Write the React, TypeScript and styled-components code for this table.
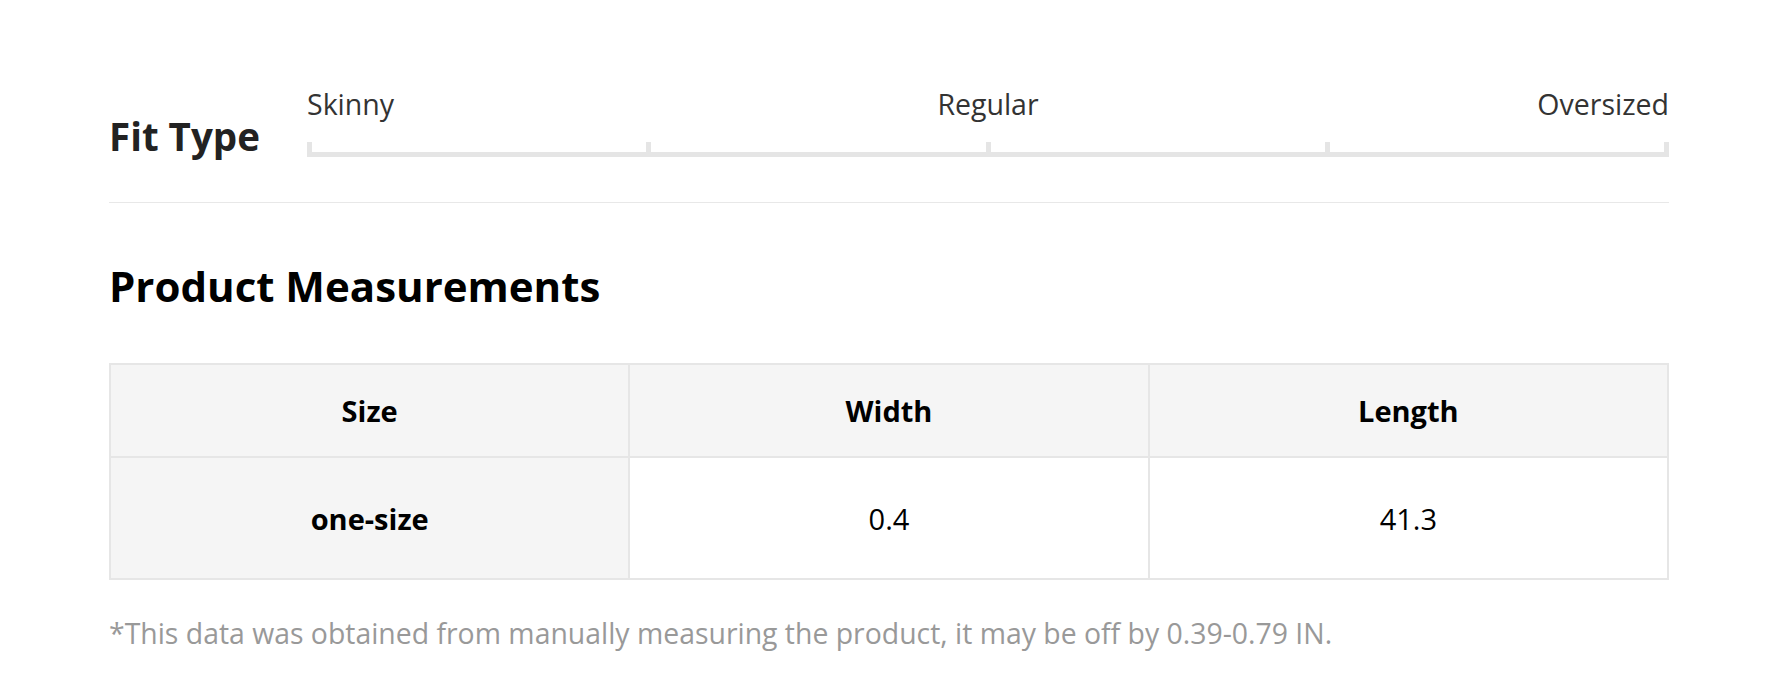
import React from "react";
import styled, { createGlobalStyle } from "styled-components";

const GlobalStyle = createGlobalStyle`
  html, body {
    margin: 0;
    padding: 0;
    background: #ffffff;
  }
  body {
    font-family: "Open Sans", "Noto Sans", Arial, sans-serif;
    color: #222222;
  }
`;

const Page = styled.div`
  width: 1560px;
  padding: 0 0 0 109px;
`;

const FitSection = styled.section`
  display: flex;
  align-items: flex-end;
  padding-top: 84px;
  padding-bottom: 45px;
  border-bottom: 1px solid #e8e8e8;
`;

const FitLabel = styled.h3`
  margin: 0 0 1px 0;
  width: 198px;
  flex: none;
  font-size: 38.5px;
  line-height: 40px;
  font-weight: 700;
  color: #222222;
`;

const Scale = styled.div`
  flex: 1;
  display: flex;
  flex-direction: column;
  gap: 18px;
`;

const ScaleLabels = styled.div`
  display: grid;
  grid-template-columns: 1fr 1fr 1fr;
  font-size: 28.5px;
  line-height: 40px;
  color: #333333;
`;

const ScaleLabel = styled.span<{ $align: "left" | "center" | "right" }>`
  text-align: ${(p) => p.$align};
  white-space: nowrap;
`;

const Track = styled.div`
  position: relative;
  height: 15px;
`;

const Bar = styled.div`
  position: absolute;
  left: 0;
  right: 0;
  bottom: 0;
  height: 5px;
  background: #e5e5e5;
`;

const Tick = styled.span<{ $pos: number }>`
  position: absolute;
  bottom: 0;
  width: 5px;
  height: 15px;
  background: #e5e5e5;
  left: ${(p) => `calc(${p.$pos}% - ${(p.$pos / 100) * 5}px)`};
`;

const Heading = styled.h2`
  margin: 57px 0 0 0;
  font-size: 42px;
  line-height: 52px;
  font-weight: 700;
  color: #000000;
`;

const Table = styled.table`
  margin-top: 51px;
  width: 1560px;
  border-collapse: collapse;
  table-layout: fixed;
  border: 2px solid #e6e6e6;
`;

const HeadCell = styled.th`
  height: 91px;
  padding: 0;
  border: 2px solid #e6e6e6;
  background: #f5f5f5;
  font-size: 29px;
  font-weight: 700;
  color: #000000;
  text-align: center;
`;

const Cell = styled.td<{ $shaded?: boolean }>`
  height: 120px;
  padding: 0;
  border: 2px solid #e6e6e6;
  background: ${(p) => (p.$shaded ? "#f5f5f5" : "#ffffff")};
  font-size: 29px;
  font-weight: ${(p) => (p.$shaded ? 700 : 400)};
  color: #000000;
  text-align: center;
`;

const Note = styled.p`
  margin: 33px 0 0 0;
  font-size: 28.4px;
  line-height: 40px;
  color: #999999;
`;

const ticks = [0, 25, 50, 75, 100];

export default function App() {
  return (
    <>
      <GlobalStyle />
      <Page>
        <FitSection>
          <FitLabel>Fit Type</FitLabel>
          <Scale>
            <ScaleLabels>
              <ScaleLabel $align="left">Skinny</ScaleLabel>
              <ScaleLabel $align="center">Regular</ScaleLabel>
              <ScaleLabel $align="right">Oversized</ScaleLabel>
            </ScaleLabels>
            <Track>
              <Bar />
              {ticks.map((t) => (
                <Tick key={t} $pos={t} />
              ))}
            </Track>
          </Scale>
        </FitSection>
        <Heading>Product Measurements</Heading>
        <Table>
          <thead>
            <tr>
              <HeadCell>Size</HeadCell>
              <HeadCell>Width</HeadCell>
              <HeadCell>Length</HeadCell>
            </tr>
          </thead>
          <tbody>
            <tr>
              <Cell $shaded>one-size</Cell>
              <Cell>0.4</Cell>
              <Cell>41.3</Cell>
            </tr>
          </tbody>
        </Table>
        <Note>
          *This data was obtained from manually measuring the product, it may be off by 0.39-0.79 IN.
        </Note>
      </Page>
    </>
  );
}
